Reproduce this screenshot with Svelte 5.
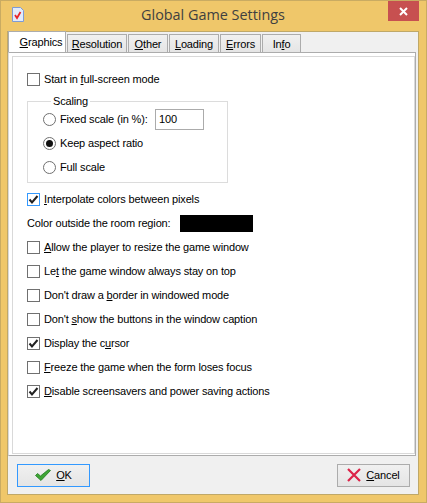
<script>
  const options = [
    { pre: "", key: "A", rest: "llow the player to resize the game window" },
    { pre: "Le", key: "t", rest: " the game window always stay on top" },
    { pre: "Don't draw a ", key: "b", rest: "order in windowed mode" },
    { pre: "Don't ", key: "s", rest: "how the buttons in the window caption" },
    { pre: "Display the c", key: "u", rest: "rsor", checked: true },
    { pre: "", key: "F", rest: "reeze the game when the form loses focus" },
    { pre: "", key: "D", rest: "isable screensavers and power saving actions", checked: true }
  ];
  const tabs = [
    { pre: "", key: "G", rest: "raphics", w: 58, active: true },
    { pre: "", key: "R", rest: "esolution", w: 60 },
    { pre: "", key: "O", rest: "ther", w: 40 },
    { pre: "", key: "L", rest: "oading", w: 50 },
    { pre: "", key: "E", rest: "rrors", w: 41 },
    { pre: "In", key: "f", rest: "o", w: 39 }
  ];
</script>

{#snippet tick()}
  <svg width="11" height="11" viewBox="0 0 11 11"><path d="M1.500 5.500 L4 8.500 L9.500 2" fill="none" stroke="#222" stroke-width="2"/></svg>
{/snippet}

<div class="window">
  <div class="titlebar">
    <svg class="appicon" width="12" height="15" viewBox="0 0 12 15">
      <path d="M.5.5h8l3 3v11H.5z" fill="#e3ebfa" stroke="#7d9bd6"/>
      <path d="M3 8l2 3 3.500-6" fill="none" stroke="#e8262a" stroke-width="1.800"/>
    </svg>
    <span class="title">Global Game Settings</span>
    <div class="close">
      <svg width="9" height="9" viewBox="0 0 9 9"><path d="M1 1l7 7M8 1l-7 7" stroke="#fff" stroke-width="2"/></svg>
    </div>
  </div>

  <div class="client">
    <div class="tabs">
      {#each tabs as t}
        <div class="tab" class:active={t.active} style="width: {t.w}px">{t.pre}<u>{t.key}</u>{t.rest}</div>
      {/each}
    </div>

    <div class="frame">
      <div class="page">
        <label class="row first">
          <span class="check"></span>
          <span>Start in <u>f</u>ull-screen mode</span>
        </label>

        <fieldset class="group">
          <legend>Scaling</legend>
          <div class="radio-row">
            <span class="radio"></span><span class="radio-text">Fixed scale (in %):</span>
            <div class="input">100</div>
          </div>
          <div class="radio-row">
            <span class="radio on"></span><span class="radio-text">Keep aspect ratio</span>
          </div>
          <div class="radio-row">
            <span class="radio"></span><span class="radio-text">Full scale</span>
          </div>
        </fieldset>

        <label class="row interp">
          <span class="check focus">{@render tick()}</span>
          <span><u>I</u>nterpolate colors between pixels</span>
        </label>

        <div class="row color-row">
          <span class="color-label">Color outside the room region:</span>
          <div class="swatch"></div>
        </div>

        {#each options as o}
          <label class="row">
            <span class="check">{#if o.checked}{@render tick()}{/if}</span>
            <span>{o.pre}<u>{o.key}</u>{o.rest}</span>
          </label>
        {/each}
      </div>
    </div>

    <div class="buttons">
      <div class="btn default">
        <svg width="16" height="12" viewBox="0 0 16 12">
          <path d="M.5 6.500L2.500 4.500 5.500 7 13.500.5 15.500 1.500 6 11.500z" fill="#3fa535" stroke="#1f7a1f" stroke-width=".8"/>
        </svg>
        <span><u>O</u>K</span>
      </div>
      <div class="btn">
        <svg width="14" height="14" viewBox="0 0 14 14">
          <path d="M1 1l12 12M13 1L1 13" stroke="#dc2348" stroke-width="2.200"/>
        </svg>
        <span><u>C</u>ancel</span>
      </div>
    </div>
  </div>
</div>

<style>
  :global(body) {
    margin: 0;
    background: #efc76a;
  }
  .window {
    box-sizing: border-box;
    width: 427px;
    height: 503px;
    background: #efc76a;
    border: 1px solid #c9ab62;
    padding: 0 7px 7px 6px;
    display: flex;
    flex-direction: column;
    font-family: "Liberation Sans", sans-serif;
    font-size: 11px;
    letter-spacing: -0.15px;
    color: #000;
  }
  .titlebar {
    height: 30px;
    flex: none;
    display: flex;
    align-items: flex-start;
    justify-content: center;
    position: relative;
  }
  .appicon {
    position: absolute;
    left: 5px;
    top: 6px;
  }
  .title {
    font-family: "Open Sans", sans-serif;
    font-size: 14.4px;
    letter-spacing: 0;
    color: #404040;
    margin-top: 4px;
  }
  .close {
    position: absolute;
    right: 0;
    top: 0;
    width: 31px;
    height: 20px;
    background: #c75050;
    display: flex;
    align-items: center;
    justify-content: center;
  }
  .client {
    flex: 1;
    background: #f0f0f0;
    border: 1px solid #bfa868;
    display: flex;
    flex-direction: column;
    min-height: 0;
  }
  .tabs {
    display: flex;
    height: 20px;
    flex: none;
    position: relative;
    z-index: 1;
  }
  .tab {
    box-sizing: border-box;
    height: 18px;
    margin-top: 2px;
    margin-right: 1px;
    border: 1px solid #acacac;
    border-bottom: none;
    background: linear-gradient(#f0f0f0, #e5e5e5);
    text-align: center;
    line-height: 18px;
    white-space: nowrap;
  }
  .tab.active {
    height: 21px;
    margin-top: -1px;
    background: #fff;
    line-height: 20px;
    padding-left: 8px;
  }
  .frame {
    flex: none;
    height: 404px;
    margin-right: 2px;
    border: 1px solid #acacac;
    border-left-color: #d9d9d9;
    background: #fff;
    padding: 3px 0 1px 3px;
    box-sizing: border-box;
  }
  .page {
    height: 100%;
    box-sizing: border-box;
    border: 1px solid #d9d9d9;
    background: #fff;
    padding: 10px 0 0 14px;
    display: flex;
    flex-direction: column;
  }
  .row {
    display: flex;
    align-items: center;
    height: 24px;
    flex: none;
    gap: 4px;
    white-space: nowrap;
  }
  .row.first {
    margin-bottom: 4px;
  }
  .check {
    box-sizing: border-box;
    width: 13px;
    height: 13px;
    border: 1px solid #707070;
    background: #fff;
    flex: none;
    display: flex;
    align-items: center;
    justify-content: center;
  }
  .check.focus {
    border-color: #3399ff;
  }
  .group {
    box-sizing: border-box;
    margin: 0 0 4px 0;
    width: 201px;
    height: 88px;
    flex: none;
    border: 1px solid #dcdcdc;
    padding: 0 0 0 15px;
  }
  legend {
    padding: 0 2px;
    margin-left: 8px;
    line-height: 12px;
  }
  .radio-row {
    display: flex;
    align-items: center;
    height: 24px;
    gap: 4px;
  }
  .radio {
    box-sizing: border-box;
    width: 13px;
    height: 13px;
    border: 1px solid #707070;
    border-radius: 50%;
    background: #fff;
    flex: none;
    display: flex;
    align-items: center;
    justify-content: center;
  }
  .radio.on::after {
    content: "";
    width: 7px;
    height: 7px;
    border-radius: 50%;
    background: #111;
  }
  .radio-text {
    width: 92px;
    white-space: nowrap;
  }
  .input {
    box-sizing: border-box;
    width: 49px;
    height: 21px;
    border: 1px solid #ababab;
    line-height: 19px;
    padding-left: 3px;
    background: #fff;
    margin-left: -1px;
  }
  .color-row {
    gap: 0;
  }
  .color-label {
    width: 153px;
  }
  .swatch {
    width: 73px;
    height: 17px;
    background: #000;
  }
  .buttons {
    flex: 1;
    display: flex;
    justify-content: space-between;
    align-items: center;
    padding: 0 8px 0 9px;
  }
  .btn {
    box-sizing: border-box;
    width: 73px;
    height: 23px;
    border: 1px solid #acacac;
    background: linear-gradient(#f0f0f0, #e5e5e5);
    display: flex;
    align-items: center;
    justify-content: center;
    gap: 5px;
  }
  .btn.default {
    border-color: #3399ff;
  }
</style>
